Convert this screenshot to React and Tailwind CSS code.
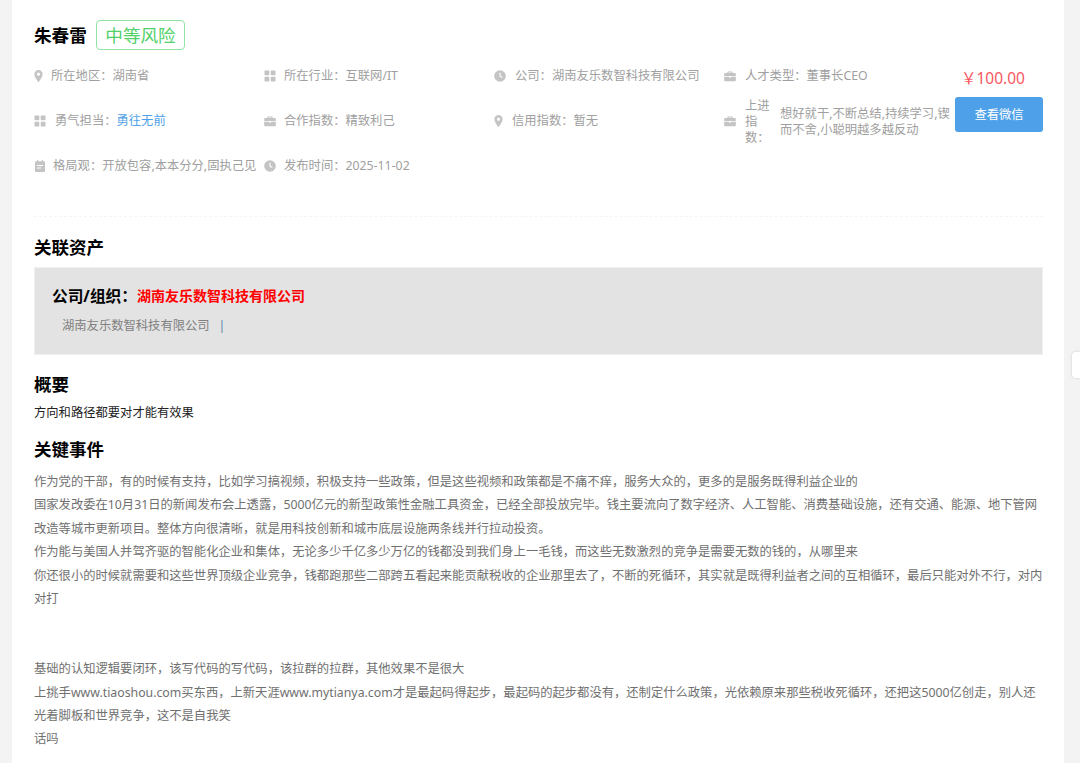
import React from 'react';

const Pin = () => (
  <svg viewBox="1.7 0.500 8.600 12.500" className="w-[9px] h-[12px] shrink-0 -mt-[2px]" fill="#c4c4c4">
    <path fillRule="evenodd" d="M6 0.5a4.3 4.3 0 0 0-4.3 4.3C1.700 8 6 13 6 13s4.300-5 4.300-8.200A4.300 4.300 0 0 0 6 0.500zm0 5.900a1.600 1.600 0 1 1 0-3.200 1.600 1.600 0 0 1 0 3.200z" />
  </svg>
);

const Grid = () => (
  <svg viewBox="0 0 12 12" className="w-[12px] h-[12px] shrink-0 -mt-[2px]" fill="#c4c4c4">
    <rect x="0.500" y="0.500" width="4.800" height="4.800" rx="0.800" />
    <rect x="6.700" y="0.500" width="4.800" height="4.800" rx="0.800" />
    <rect x="0.500" y="6.700" width="4.800" height="4.800" rx="0.800" />
    <rect x="6.700" y="6.700" width="4.800" height="4.800" rx="0.800" />
  </svg>
);

const Clock = () => (
  <svg viewBox="0 0 12 12" className="w-[12px] h-[12px] shrink-0 -mt-[2px]">
    <circle cx="6" cy="6" r="5.800" fill="#c4c4c4" />
    <path d="M6 2.800V6.300L8.300 7.600" fill="none" stroke="#fff" strokeWidth="1.100" />
  </svg>
);

const Case = () => (
  <svg viewBox="0 0 12 12" className="w-[12px] h-[12px] shrink-0 -mt-[2px]" fill="#c4c4c4">
    <path d="M4 1.500h4a.7.7 0 0 1 .7.7V3h2.300a.8.8 0 0 1 .8.8V6H.2V3.800A.8.8 0 0 1 1 3h2.300v-.8A.7.7 0 0 1 4 1.500zm.4 1V3h3.200v-.5z" fillRule="evenodd" />
    <path d="M.2 6.800h4.600v.8h2.400v-.8h4.600v3.600a.8.8 0 0 1-.8.8H1a.8.8 0 0 1-.8-.8z" />
  </svg>
);

const Note = () => (
  <svg viewBox="0 0 12 12" className="w-[12px] h-[12px] shrink-0 -mt-[2px]" fill="#c4c4c4">
    <path fillRule="evenodd" d="M3 0h1.200v1.200h3.600V0H9v1.200h1.200a.8.8 0 0 1 .8.800v9.200a.8.8 0 0 1-.8.800H1.800a.8.8 0 0 1-.8-.8V2a.8.8 0 0 1 .8-.8H3zM3 5v1h6V5zm0 2.400v1h4v-1z" />
  </svg>
);

function Meta({ icon, gap = 'gap-[7px]', children }) {
  return (
    <div className={`flex items-center ${gap} whitespace-nowrap`}>
      {icon}
      <span>{children}</span>
    </div>
  );
}

export default function App() {
  return (
    <div
      className="h-screen overflow-hidden bg-[#f3f3f3] relative text-[12.300px] text-[#a0a0a0]"
      style={{ fontFamily: '"Noto Sans", "Noto Sans CJK SC", sans-serif' }}
    >
      <div className="ml-[12px] w-[1052px] h-full bg-white pl-[22px] pr-[21px] pt-[20px]">
        <div className="flex items-center gap-[9px] h-[30px]">
          <h1 className="text-[17.600px] font-bold text-black">朱春雷</h1>
          <span className="h-[30px] px-[8.500px] flex items-center border border-[#8fe3a3] rounded-[4px] text-[17.600px] text-[#4fd068]">
            中等风险
          </span>
        </div>

        <div className="grid grid-cols-[230px_230px_230px_231px_88px] grid-rows-[45px_45px_45px] items-center mt-[4px] pb-[27px] border-b border-dashed border-[#f5f5f5]">
          <Meta icon={<Pin />} gap="gap-[8px]">所在地区：湖南省</Meta>
          <Meta icon={<Grid />} gap="gap-[8px]">所在行业：互联网/IT</Meta>
          <Meta icon={<Clock />} gap="gap-[9px]">公司：湖南友乐数智科技有限公司</Meta>
          <Meta icon={<Case />} gap="gap-[9px]">人才类型：董事长CEO</Meta>
          <div className="text-[15.500px] text-[#f8585f] pl-[6px] pt-[4px]">￥100.00</div>

          <Meta icon={<Grid />} gap="gap-[9px]">
            勇气担当：<span className="text-[#4ea1e8]">勇往无前</span>
          </Meta>
          <Meta icon={<Case />} gap="gap-[8px]">合作指数：精致利己</Meta>
          <Meta icon={<Pin />} gap="gap-[9px]">信用指数：暂无</Meta>
          <div className="flex items-center">
            <Case />
            <span className="w-[26px] ml-[9px] leading-[16px] shrink-0">上进指数：</span>
            <span className="ml-[9px] w-[172px] shrink-0 leading-[16px]">想好就干,不断总结,持续学习,锲而不舍,小聪明越多越反动</span>
          </div>
          <button className="self-start -mt-[2px] pt-[2px] w-[88px] h-[35px] bg-[#4ea1e8] rounded-[3px] text-white">查看微信</button>

          <Meta icon={<Note />} gap="gap-[7px]">格局观：开放包容,本本分分,固执己见</Meta>
          <Meta icon={<Clock />} gap="gap-[8px]">发布时间：2025-11-02</Meta>
        </div>

        <h2 className="text-[17.500px] font-bold text-black mt-[18px] leading-[24px]">关联资产</h2>
        <div className="mt-[8px] h-[88px] bg-[#e3e3e3] border border-[#f0f0f0] px-[17px] pt-[18px]">
          <div className="flex items-center h-[22px]">
            <span className="text-[15.700px] font-bold text-black">公司/组织：</span>
            <span className="mb-[4px] text-[14px] font-bold text-[#ff0000]">湖南友乐数智科技有限公司</span>
          </div>
          <div className="mt-[8px] pl-[10px] text-[#808080] leading-[20px]">
            湖南友乐数智科技有限公司<span className="ml-[9px] text-[#5f86ad]">|</span>
          </div>
        </div>

        <h2 className="text-[17.500px] font-bold text-black mt-[17px] leading-[24px]">概要</h2>
        <p className="mt-[7px] text-[#222] leading-[20px]">方向和路径都要对才能有效果</p>

        <h2 className="text-[17.500px] font-bold text-black mt-[14px] leading-[24px]">关键事件</h2>
        <div className="mt-[9px] text-[#707070] leading-[23.400px]">
          <p>作为党的干部，有的时候有支持，比如学习搞视频，积极支持一些政策，但是这些视频和政策都是不痛不痒，服务大众的，更多的是服务既得利益企业的</p>
          <p>国家发改委在10月31日的新闻发布会上透露，5000亿元的新型政策性金融工具资金，已经全部投放完毕。钱主要流向了数字经济、人工智能、消费基础设施，还有交通、能源、地下管网改造等城市更新项目。整体方向很清晰，就是用科技创新和城市底层设施两条线并行拉动投资。</p>
          <p>作为能与美国人并驾齐驱的智能化企业和集体，无论多少千亿多少万亿的钱都没到我们身上一毛钱，而这些无数激烈的竞争是需要无数的钱的，从哪里来</p>
          <p>你还很小的时候就需要和这些世界顶级企业竞争，钱都跑那些二部跨五看起来能贡献税收的企业那里去了，不断的死循环，其实就是既得利益者之间的互相循环，最后只能对外不行，对内对打</p>
          <p className="h-[46.800px]"></p>
          <p>基础的认知逻辑要闭环，该写代码的写代码，该拉群的拉群，其他效果不是很大</p>
          <p>上挑手www.tiaoshou.com买东西，上新天涯www.mytianya.com才是最起码得起步，最起码的起步都没有，还制定什么政策，光依赖原来那些税收死循环，还把这5000亿创走，别人还光着脚板和世界竞争，这不是自我笑</p>
          <p>话吗</p>
        </div>
      </div>

      {/* floating side tab */}
      <div className="absolute right-0 top-[352px] w-[8px] h-[26px] bg-white rounded-l-[4px] shadow-[0_0_3px_rgba(0,0,0,0.15)]"></div>
    </div>
  );
}
